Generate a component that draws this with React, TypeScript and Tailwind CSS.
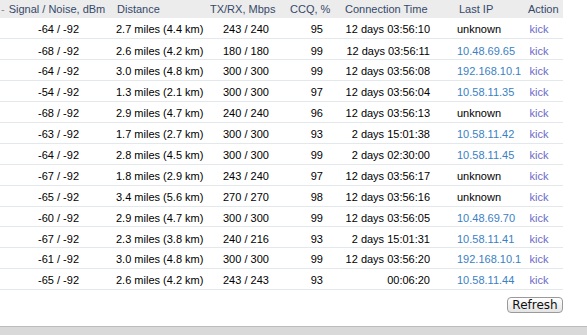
import React from "react";

type Row = {
  signal: string;
  distance: string;
  txrx: string;
  ccq: string;
  time: string;
  ip: string;
};

const rows: Row[] = [
  { signal: "-64 / -92", distance: "2.7 miles (4.4 km)", txrx: "243 / 240", ccq: "95", time: "12 days 03:56:10", ip: "unknown" },
  { signal: "-68 / -92", distance: "2.6 miles (4.2 km)", txrx: "180 / 180", ccq: "99", time: "12 days 03:56:11", ip: "10.48.69.65" },
  { signal: "-64 / -92", distance: "3.0 miles (4.8 km)", txrx: "300 / 300", ccq: "99", time: "12 days 03:56:08", ip: "192.168.10.1" },
  { signal: "-54 / -92", distance: "1.3 miles (2.1 km)", txrx: "300 / 300", ccq: "97", time: "12 days 03:56:04", ip: "10.58.11.35" },
  { signal: "-68 / -92", distance: "2.9 miles (4.7 km)", txrx: "240 / 240", ccq: "96", time: "12 days 03:56:13", ip: "unknown" },
  { signal: "-63 / -92", distance: "1.7 miles (2.7 km)", txrx: "300 / 300", ccq: "93", time: "2 days 15:01:38", ip: "10.58.11.42" },
  { signal: "-64 / -92", distance: "2.8 miles (4.5 km)", txrx: "300 / 300", ccq: "99", time: "2 days 02:30:00", ip: "10.58.11.45" },
  { signal: "-67 / -92", distance: "1.8 miles (2.9 km)", txrx: "243 / 240", ccq: "97", time: "12 days 03:56:17", ip: "unknown" },
  { signal: "-65 / -92", distance: "3.4 miles (5.6 km)", txrx: "270 / 270", ccq: "98", time: "12 days 03:56:16", ip: "unknown" },
  { signal: "-60 / -92", distance: "2.9 miles (4.7 km)", txrx: "300 / 300", ccq: "99", time: "12 days 03:56:05", ip: "10.48.69.70" },
  { signal: "-67 / -92", distance: "2.3 miles (3.8 km)", txrx: "240 / 216", ccq: "93", time: "2 days 15:01:31", ip: "10.58.11.41" },
  { signal: "-61 / -92", distance: "3.0 miles (4.8 km)", txrx: "300 / 300", ccq: "99", time: "12 days 03:56:20", ip: "192.168.10.1" },
  { signal: "-65 / -92", distance: "2.6 miles (4.2 km)", txrx: "243 / 243", ccq: "93", time: "00:06:20", ip: "10.58.11.44" },
];

export default function App() {
  return (
    <div
      className="w-[587px] h-[335px] bg-white flex flex-col overflow-hidden text-[11px] text-black"
      style={{ fontFamily: '"Liberation Sans", Arial, sans-serif' }}
    >
      <table className="table-fixed border-collapse w-[563px]">
        <colgroup>
          <col className="w-[110px]" />
          <col className="w-[95px]" />
          <col className="w-[77px]" />
          <col className="w-[58px]" />
          <col className="w-[100px]" />
          <col className="w-[75px]" />
          <col className="w-[48px]" />
        </colgroup>
        <thead>
          <tr className="h-[18px] bg-[#ececec] text-[#34496a]">
            <th className="font-normal text-left pl-[1px] pt-[1px] whitespace-nowrap">
              <span className="text-[#8a8a8a] mr-[4px]">-</span>Signal / Noise, dBm
            </th>
            <th className="font-normal text-left pl-[7px] pt-[1px]">Distance</th>
            <th className="font-normal text-left pl-[5px] pt-[1px] whitespace-nowrap">TX/RX, Mbps</th>
            <th className="font-normal text-left pl-[8px] pt-[1px] whitespace-nowrap">CCQ, %</th>
            <th className="font-normal text-left pl-[5px] pt-[1px] whitespace-nowrap">Connection Time</th>
            <th className="font-normal text-left pl-[19px] pt-[1px] whitespace-nowrap">Last IP</th>
            <th className="font-normal text-left pl-[13px] pt-[1px]">Action</th>
          </tr>
        </thead>
        <tbody>
          {rows.map((r, i) => (
            <tr key={i} className="h-[20.9px] border-b border-[#e3e8ec] [&>td]:pt-[3px] [&>td]:pb-0">
              <td className="text-right pr-[31px] whitespace-nowrap">{r.signal}</td>
              <td className="pl-[6px] whitespace-nowrap">{r.distance}</td>
              <td className="pl-[18px] whitespace-nowrap">{r.txrx}</td>
              <td className="text-right pr-[17px]">{r.ccq}</td>
              <td className="text-right pr-[10px] whitespace-nowrap">{r.time}</td>
              <td className={"pl-[17px] whitespace-nowrap " + (r.ip === "unknown" ? "text-black" : "text-[#3b7fc4]")}>
                {r.ip}
              </td>
              <td className="text-center text-[#6b6bc8]">kick</td>
            </tr>
          ))}
        </tbody>
      </table>
      <div className="w-[563px] flex justify-end pt-[7px]">
        <button
          className="h-[16px] w-[56px] rounded-[4px] border border-[#9a9a9a] bg-gradient-to-b from-white to-[#e4e4e4] text-[12px] leading-none text-[#111] flex items-center justify-center"
          style={{ fontFamily: '"DejaVu Sans", sans-serif' }}
        >
          Refresh
        </button>
      </div>
      <div className="flex-1" />
      <div className="h-[9px] bg-[#d9d9d9] border-t border-[#bdbdbd]" />
    </div>
  );
}
